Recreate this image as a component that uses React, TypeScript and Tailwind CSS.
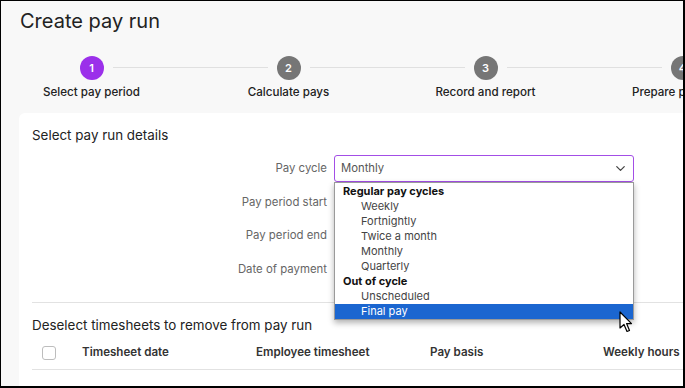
import { ChevronDown } from "lucide-react";

const steps = [
  { n: 1, label: "Select pay period", active: true },
  { n: 2, label: "Calculate pays" },
  { n: 3, label: "Record and report" },
  { n: 4, label: "Prepare payments" },
];

const fields = ["Pay cycle", "Pay period start", "Pay period end", "Date of payment"];

const options = [
  { label: "Regular pay cycles", group: true },
  { label: "Weekly" },
  { label: "Fortnightly" },
  { label: "Twice a month" },
  { label: "Monthly" },
  { label: "Quarterly" },
  { label: "Out of cycle", group: true },
  { label: "Unscheduled" },
  { label: "Final pay", selected: true },
];

const columns = [
  { label: "Timesheet date", w: "w-[174px]" },
  { label: "Employee timesheet", w: "w-[174px]" },
  { label: "Pay basis", w: "w-[173px]" },
  { label: "Weekly hours", w: "w-[120px]" },
];

function Cursor() {
  return (
    <svg className="absolute left-[284px] top-[128px]" width="14" height="22" viewBox="0 0 14 22">
      <path
        d="M1 1 L1 17 L5 13.5 L8 20.5 L10.5 19.5 L7.6 12.6 L12.5 12.6 Z"
        fill="#fff"
        stroke="#000"
        strokeWidth="1.2"
        strokeLinejoin="round"
      />
    </svg>
  );
}

export default function App() {
  return (
    <div
      className="w-[685px] h-[388px] overflow-hidden bg-[#f8f8f8] border-l border-t border-r-2 border-b-2 border-black"
      style={{ fontFamily: "Inter, 'Noto Sans', sans-serif" }}
    >
      {/* Title */}
      <h1 className="pl-[19px] pt-[7px] h-[36px] text-[20px] leading-[26px] text-[#222]">Create pay run</h1>

      {/* Stepper */}
      <div className="flex -ml-[8px] pt-[19px] h-[76px] whitespace-nowrap">
        {steps.map((s, i) => (
          <div key={s.n} className="relative w-[197px] shrink-0 flex flex-col items-center">
            {i < steps.length - 1 && (
              <div className="absolute left-[120px] top-[11px] w-[155px] h-px bg-[#e0e0e0]" />
            )}
            <div
              className={`w-6 h-6 rounded-full flex items-center justify-center text-white text-[11px] font-semibold ${
                s.active ? "bg-[#9b30ea]" : "bg-[#767676]"
              }`}
            >
              {s.n}
            </div>
            <div className="mt-[4px] text-[11.6px] font-medium text-[#222]">{s.label}</div>
          </div>
        ))}
      </div>

      {/* Card */}
      <div className="ml-[18px] bg-white rounded-tl-md h-[300px] pl-[13px] pt-[12px]">
        <h2 className="text-[13.4px] leading-[20px] text-[#222]">Select pay run details</h2>

        <div className="mt-[7px] flex flex-col">
          {fields.map((f, i) => (
            <div key={f} className="flex items-center h-[33.5px]">
              <div className="w-[295px] text-right text-[11.4px] text-[#666]">{f}</div>
              {i === 0 && (
                <div className="relative ml-[7px]">
                  <div className="w-[300px] h-[27px] border border-[#a34ee6] rounded-[3px] flex items-center justify-between pl-[6px] pr-[5px]">
                    <span className="text-[11.3px] text-[#555]">Monthly</span>
                    <ChevronDown size={15} strokeWidth={2} className="text-[#444]" />
                  </div>
                  <div className="absolute z-10 left-0 top-[27px] w-[300px] bg-white border border-[#9a9a9a] shadow-[0_3px_6px_rgba(0,0,0,0.3)] pt-px">
                    {options.map((o) => (
                      <div
                        key={o.label}
                        className={`h-[15px] leading-[15px] text-[11px] ${
                          o.group
                            ? "pl-2 font-bold text-[#111]"
                            : o.selected
                            ? "pl-[26px] bg-[#1b66d0] text-white"
                            : "pl-[26px] text-[#444]"
                        }`}
                      >
                        {o.label}
                      </div>
                    ))}
                    <Cursor />
                  </div>
                </div>
              )}
            </div>
          ))}
        </div>

        <div className="mt-[16px] h-px bg-[#e2e2e2]" />

        <h2 className="mt-[12px] text-[13.4px] leading-[20px] text-[#222]">Deselect timesheets to remove from pay run</h2>

        <div className="mt-[6px] flex items-center h-[24px] pl-[10px] whitespace-nowrap">
          <div className="w-[14px] h-[14px] shrink-0 rounded-[3px] border border-[#bdbdbd] mr-[26px]" />
          {columns.map((c) => (
            <div key={c.label} className={`${c.w} shrink-0 text-[11.6px] font-semibold text-[#333]`}>
              {c.label}
            </div>
          ))}
        </div>
        <div className="mt-[4px] h-px bg-[#e2e2e2]" />
      </div>
    </div>
  );
}
